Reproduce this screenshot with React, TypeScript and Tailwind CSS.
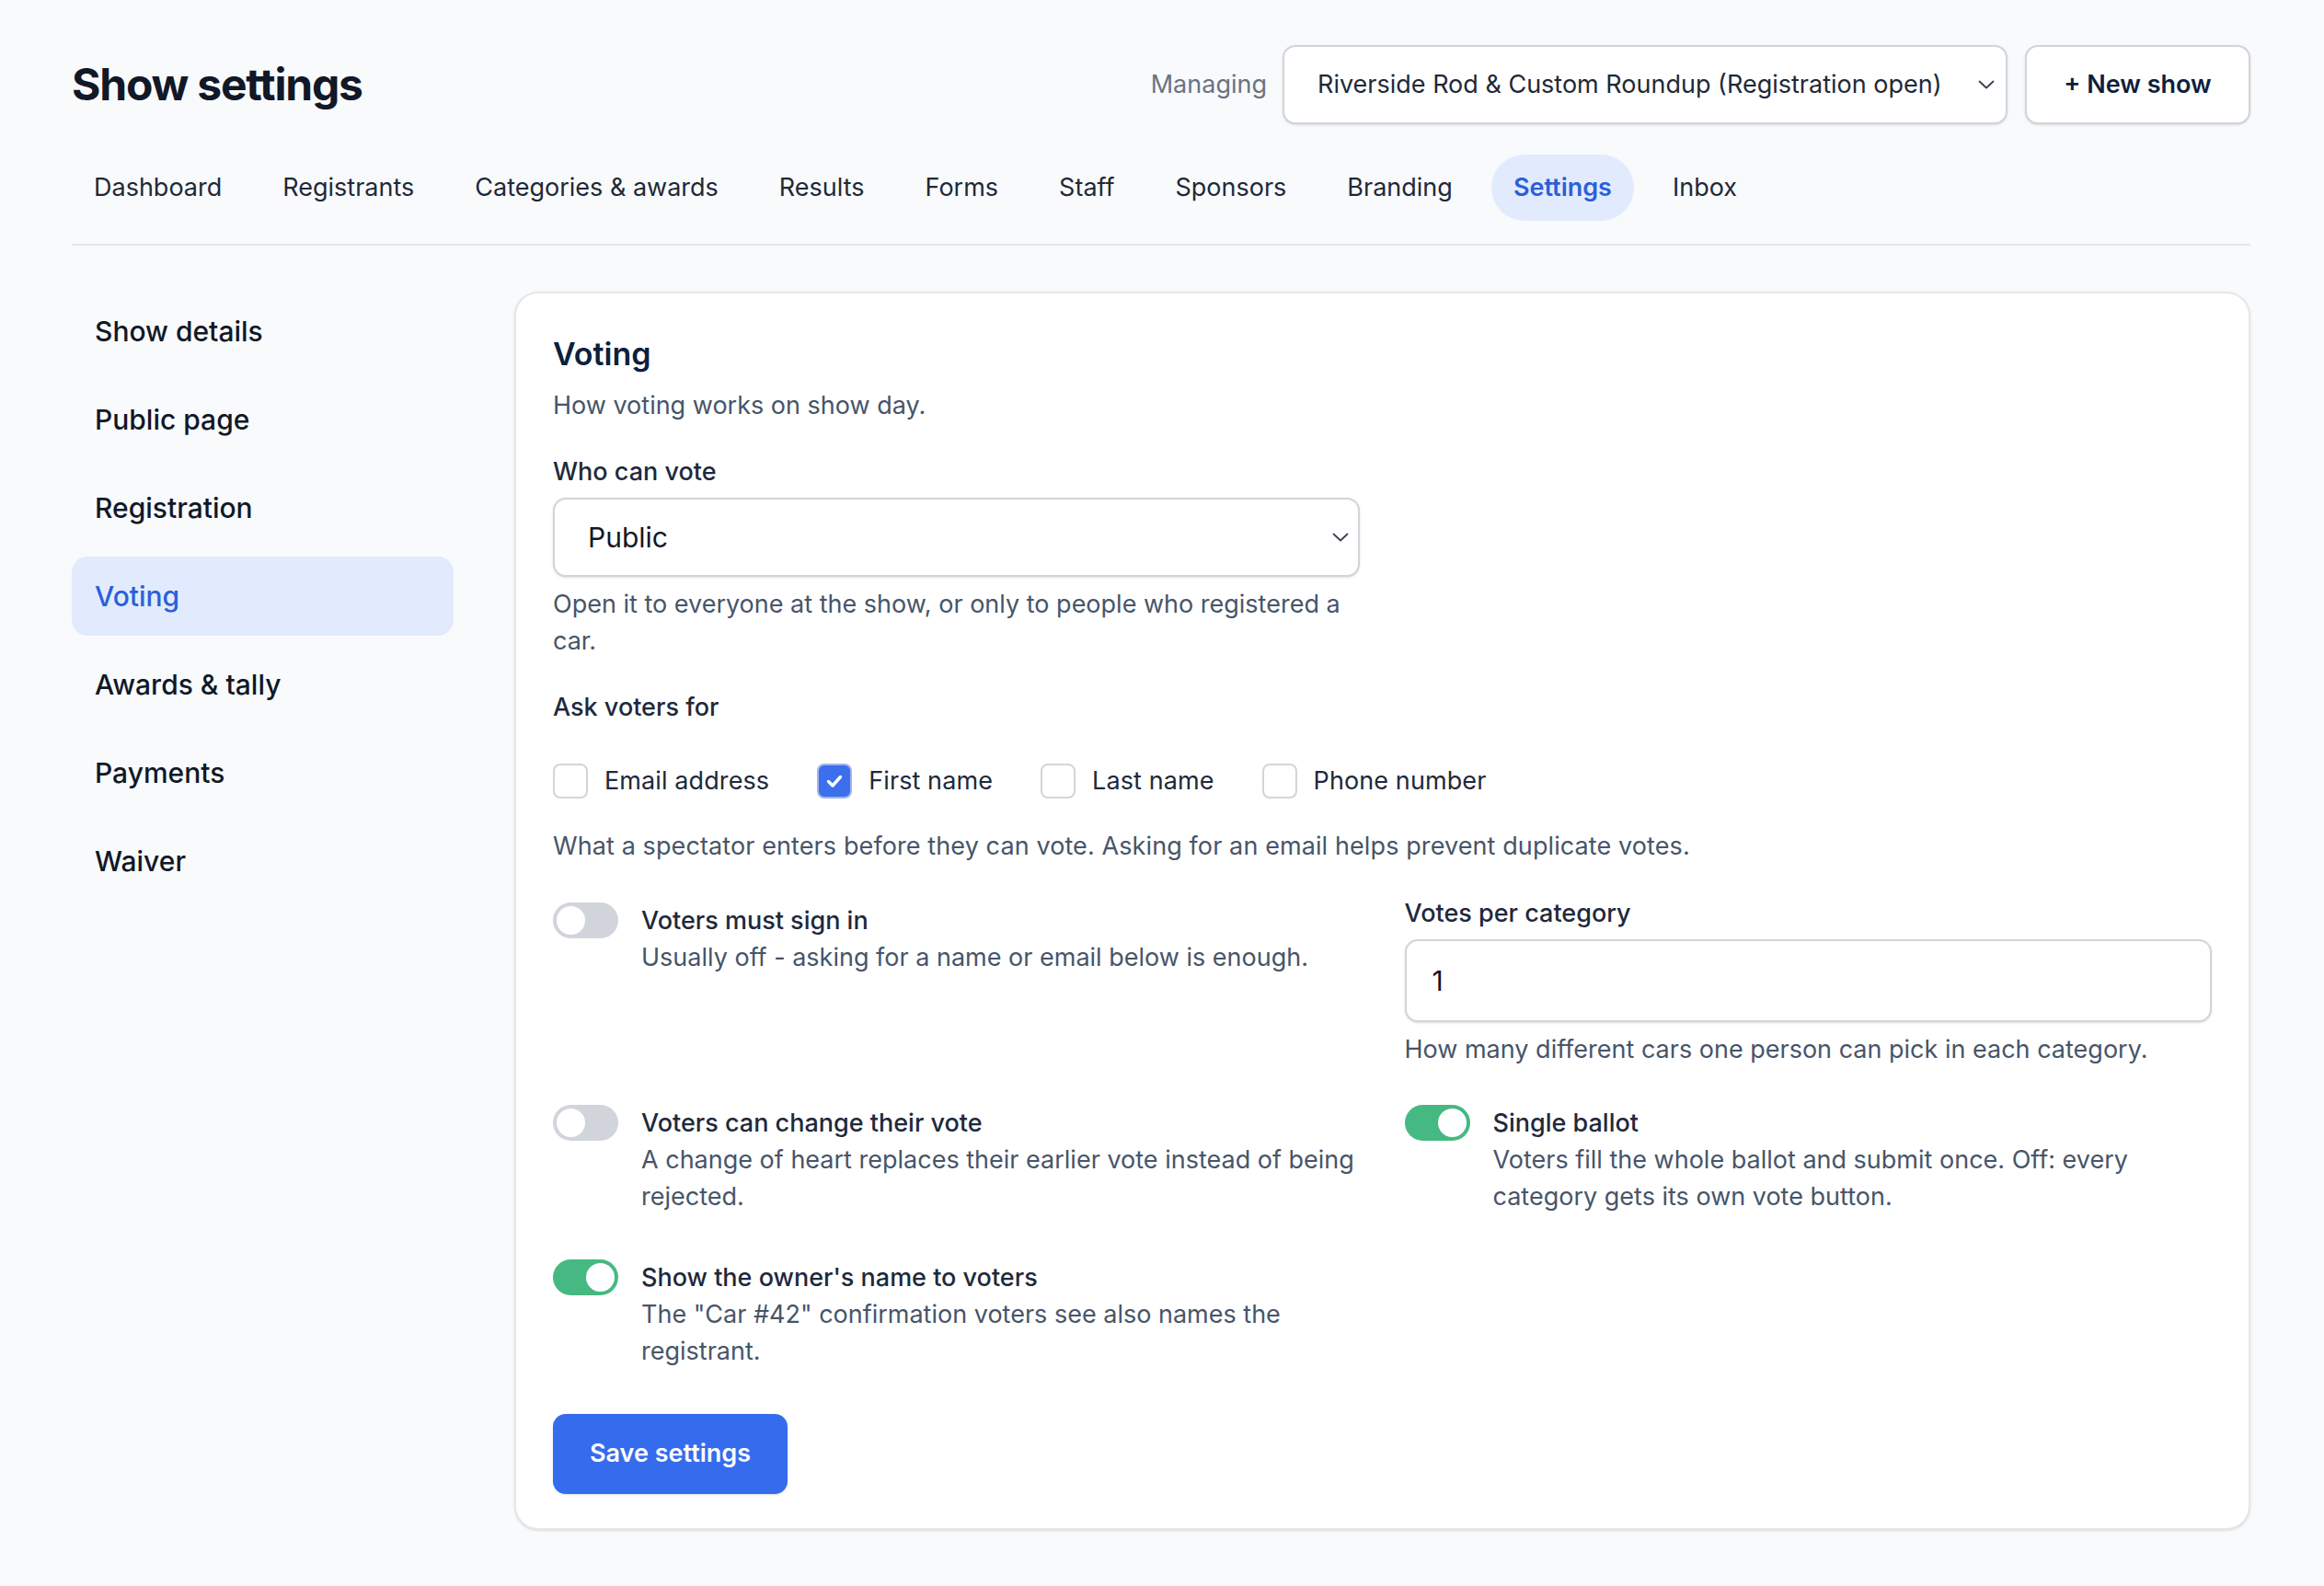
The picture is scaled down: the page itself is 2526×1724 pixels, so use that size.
import { useState } from 'react'

const navItems = ['Dashboard', 'Registrants', 'Categories & awards', 'Results', 'Forms', 'Staff', 'Sponsors', 'Branding', 'Settings', 'Inbox']
const sideItems = ['Show details', 'Public page', 'Registration', 'Voting', 'Awards & tally', 'Payments', 'Waiver']

function Chevron() {
  return (
    <svg width="18" height="10" viewBox="0 0 18 10" fill="none" className="shrink-0">
      <path d="M1.5 1.5 L9 8.5 L16.5 1.5" stroke="#374151" strokeWidth="1.8" strokeLinecap="round" strokeLinejoin="round" />
    </svg>
  )
}

function Checkbox({ label, checked }: { label: string; checked?: boolean }) {
  return (
    <label className="flex items-center gap-[18px]">
      <span
        className={
          checked
            ? 'w-[38px] h-[38px] rounded-[8px] border-2 border-[#9db4ee] bg-[#3b6fec] flex items-center justify-center'
            : 'w-[38px] h-[38px] rounded-[8px] border-2 border-[#d1d5db] bg-white'
        }
      >
        {checked && (
          <svg width="22" height="22" viewBox="0 0 22 22" fill="none">
            <path d="M4.5 11.5 L9 16 L17.5 6.5" stroke="white" strokeWidth="3.4" strokeLinecap="round" strokeLinejoin="round" />
          </svg>
        )}
      </span>
      <span className="text-[27px] leading-[40px] tracking-[0.1px] text-[#1e293b]">{label}</span>
    </label>
  )
}

function Toggle({ on, title, desc }: { on?: boolean; title: string; desc: string }) {
  return (
    <div className="flex items-start gap-[25px] py-[8px]">
      <span
        className={
          on
            ? 'w-[71px] h-[39px] shrink-0 rounded-full bg-[#46b982] p-[4px] flex justify-end'
            : 'w-[71px] h-[39px] shrink-0 rounded-full bg-[#d1d5db] p-[4px] flex justify-start'
        }
      >
        <span className="w-[31px] h-[31px] rounded-full bg-white" />
      </span>
      <div>
        <div className="text-[27px] leading-[40px] font-medium text-[#1e293b]">{title}</div>
        <div className="text-[27px] leading-[40px] text-[#475569]">{desc}</div>
      </div>
    </div>
  )
}

export default function App() {
  const [tab] = useState('Settings')
  const [section] = useState('Voting')

  return (
    <div className="min-h-screen bg-[#f8fafc] font-['Inter',sans-serif] pl-[78px] pr-[80px] pt-[49px] pb-[60px]">
      <header className="flex items-center justify-between">
        <h1 className="text-[48px] leading-none font-bold tracking-tight text-[#111827]">Show settings</h1>
        <div className="flex items-center">
          <span className="text-[27px] text-[#6b7280] mr-[17px]">Managing</span>
          <div className="w-[788px] h-[86px] rounded-[14px] border-2 border-[#d1d5db] bg-white flex items-center justify-between pl-[36px] pr-[12px] shadow-sm">
            <span className="text-[27px] text-[#1f2937]">Riverside Rod &amp; Custom Roundup (Registration open)</span>
            <Chevron />
          </div>
          <button className="ml-[19px] w-[245px] h-[86px] rounded-[14px] border-2 border-[#d1d5db] bg-white text-[27px] font-semibold text-[#0f1f3d] shadow-sm">
            + New show
          </button>
        </div>
      </header>

      <nav className="mt-[33px] pb-[25px] border-b-2 border-[#e5e7eb] flex gap-[18px]">
        {navItems.map((n) => (
          <a
            key={n}
            className={
              n === tab
                ? 'h-[72px] px-[24px] rounded-full flex items-center text-[27px] bg-[#e2ebfd] text-[#2c5fd9] font-semibold'
                : 'h-[72px] px-[24px] rounded-full flex items-center text-[27px] text-[#1f2937]'
            }
          >
            {n}
          </a>
        ))}
      </nav>

      <div className="mt-[50px] flex items-start gap-[66px]">
        <aside className="w-[415px] shrink-0 flex flex-col gap-[10px]">
          {sideItems.map((s) => (
            <a
              key={s}
              className={
                s === section
                  ? 'h-[86px] px-[25px] rounded-[17px] flex items-center text-[30px] bg-[#e2ebfd] text-[#2c5fd9] font-medium'
                  : 'h-[86px] px-[25px] rounded-[17px] flex items-center text-[30px] text-[#111827] font-medium'
              }
            >
              {s}
            </a>
          ))}
        </aside>

        <section className="flex-1 bg-white border-2 border-[#e5e7eb] rounded-[26px] shadow-sm px-[40px] pt-[40px] pb-[37px]">
          <h2 className="text-[34px] leading-[52px] font-semibold text-[#0f1f3d]">Voting</h2>
          <p className="mt-[10px] text-[27px] leading-[40px] text-[#475569]">How voting works on show day.</p>

          <div className="mt-[32px] w-[877px]">
            <div className="text-[27px] leading-[40px] font-medium text-[#1e293b]">Who can vote</div>
            <div className="mt-[8px] h-[86px] rounded-[14px] border-2 border-[#d1d5db] bg-white flex items-center justify-between pl-[36px] pr-[10px] shadow-sm">
              <span className="text-[30px] text-[#111827]">Public</span>
              <Chevron />
            </div>
            <p className="mt-[10px] text-[27px] leading-[40px] text-[#475569]">
              Open it to everyone at the show, or only to people who registered a car.
            </p>
          </div>

          <div className="mt-[32px] text-[27px] leading-[40px] font-medium text-[#1e293b]">Ask voters for</div>
          <div className="mt-[40px] flex items-center gap-x-[52px]">
            <Checkbox label="Email address" />
            <Checkbox label="First name" checked />
            <Checkbox label="Last name" />
            <Checkbox label="Phone number" />
          </div>
          <p className="mt-[31px] text-[27px] leading-[40px] tracking-[0.1px] text-[#475569]">
            What a spectator enters before they can vote. Asking for an email helps prevent duplicate votes.
          </p>

          <div className="mt-[33px] grid grid-cols-2 gap-x-[48px] gap-y-[32px] items-start">
            <Toggle title="Voters must sign in" desc="Usually off - asking for a name or email below is enough." />
            <div>
              <div className="text-[27px] leading-[40px] font-medium text-[#1e293b]">Votes per category</div>
              <div className="mt-[8px] h-[90px] rounded-[14px] border-2 border-[#d1d5db] bg-white flex items-center px-[28px] shadow-sm">
                <span className="text-[30px] text-[#111827]">1</span>
              </div>
              <p className="mt-[10px] text-[27px] leading-[40px] text-[#475569]">
                How many different cars one person can pick in each category.
              </p>
            </div>
            <Toggle
              title="Voters can change their vote"
              desc="A change of heart replaces their earlier vote instead of being rejected."
            />
            <Toggle
              on
              title="Single ballot"
              desc="Voters fill the whole ballot and submit once. Off: every category gets its own vote button."
            />
            <Toggle
              on
              title="Show the owner's name to voters"
              desc={'The "Car #42" confirmation voters see also names the registrant.'}
            />
          </div>

          <button className="mt-[40px] h-[87px] px-[40px] rounded-[14px] bg-[#356ced] text-white text-[27px] font-semibold shadow-sm">
            Save settings
          </button>
        </section>
      </div>
    </div>
  )
}
